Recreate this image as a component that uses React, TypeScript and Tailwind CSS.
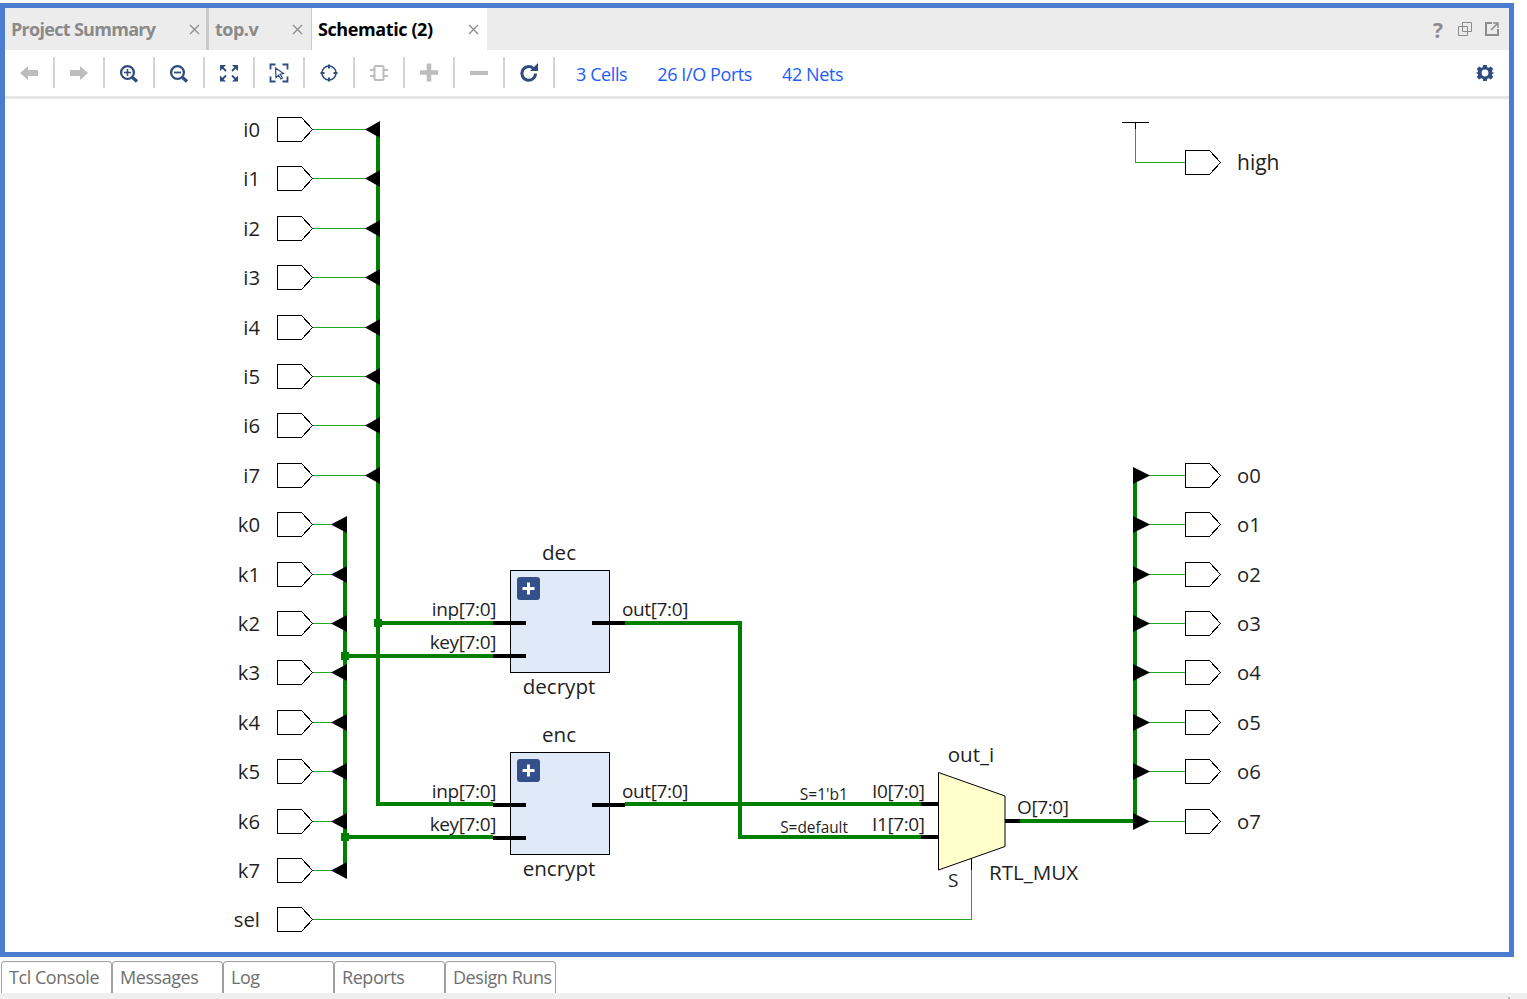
import React from "react";

const G = "#008000";
const T = "#22a822";
const INK = "#1f1f1f";
const NAVY = "#2f4b80";
const GR = "#bdbdbd";

const inputs: [string, number][] = [["i0",129],["i1",178],["i2",228],["i3",277],["i4",327],["i5",376],["i6",425],["i7",475],["k0",524],["k1",574],["k2",623],["k3",672],["k4",722],["k5",771],["k6",821],["k7",870]];
const outputs: [string, number][] = [["o0",475],["o1",524],["o2",574],["o3",623],["o4",672],["o5",722],["o6",771],["o7",821]];

// The svg origin is the canvas corner: page (5,99)
const OX = 5, OY = 99;

function Port({ x, y }: { x: number; y: number }) {
  return <polygon points={`${x+.5},${y-11.5} ${x+24.5},${y-11.5} ${x+35.5},${y+.5} ${x+24.5},${y+12.5} ${x+.5},${y+12.5}`} fill="#fff" stroke="#000" strokeWidth="1" shapeRendering="crispEdges" />;
}

function Label({ x, y, children, anchor = "start", size = 20.6, fill = INK, ls = 0 }: { x: number; y: number; children: React.ReactNode; anchor?: "start" | "middle" | "end"; size?: number; fill?: string; ls?: number }) {
  return <text x={x} y={y} textAnchor={anchor} fontSize={size} fill={fill} letterSpacing={ls} fontFamily="'Open Sans','Noto Sans',sans-serif">{children}</text>;
}

const Pin = (p: { x: number; y: number; children: React.ReactNode; anchor?: "start" | "end" }) => <Label size={19} ls={-0.38} {...p} />;

function Block({ y, inst, type }: { y: number; inst: string; type: string }) {
  return (
    <g>
      <Label x={559} y={y-10} anchor="middle">{inst}</Label>
      <rect x={510.5} y={y+.5} width={99} height={102} fill="#dfe9f7" stroke="#000" strokeWidth="1" shapeRendering="crispEdges" />
      <rect x={517} y={y+7} width={23} height={23} rx={3} fill="#34508a" />
      <path d={`M522.500 ${y+18.5}h12M528.500 ${y+12.5}v12`} stroke="#fff" strokeWidth="3" fill="none" />
      <rect x={493} y={y+51} width={33} height={4} fill="#000" />
      <rect x={493} y={y+84} width={33} height={4} fill="#000" />
      <rect x={592} y={y+51} width={33} height={4} fill="#000" />
      <Pin x={496} y={y+46} anchor="end">inp[7:0]</Pin>
      <Pin x={496} y={y+79} anchor="end">key[7:0]</Pin>
      <Pin x={622} y={y+46}>out[7:0]</Pin>
      <Label x={559} y={y+124} anchor="middle">{type}</Label>
    </g>
  );
}

function Schematic() {
  return (
    <svg width={1504} height={853} viewBox={`${OX} ${OY} 1504 853`} className="block">
      {/* buses */}
      <rect x={376} y={129} width={4} height={677} fill={G} />
      <rect x={343} y={524} width={4} height={346} fill={G} />
      <rect x={1133} y={475} width={4} height={346} fill={G} />
      <rect x={378} y={621} width={115} height={4} fill={G} />
      <rect x={345} y={654} width={148} height={4} fill={G} />
      <rect x={378} y={802} width={115} height={4} fill={G} />
      <rect x={345} y={835} width={148} height={4} fill={G} />
      <rect x={625} y={621} width={117} height={4} fill={G} />
      <rect x={738} y={621} width={4} height={218} fill={G} />
      <rect x={738} y={835} width={183} height={4} fill={G} />
      <rect x={625} y={802} width={296} height={4} fill={G} />
      <rect x={1020} y={819} width={115} height={4} fill={G} />
      {/* junctions */}
      <rect x={374} y={619} width={8} height={8} fill={G} />
      <rect x={341} y={652} width={8} height={8} fill={G} />
      <rect x={341} y={833} width={8} height={8} fill={G} />

      {/* inputs */}
      {inputs.map(([n, y], i) => {
        const tip = i < 8 ? 365 : 331;
        const right = i < 8 ? 380 : 347;
        return (
          <g key={n}>
            <rect x={313} y={y} width={tip - 313 + 2} height={1} fill={T} />
            <polygon points={`${tip},${y+.5} ${right},${y-8} ${right},${y+9}`} fill="#000" />
            <Port x={277} y={y} />
            <Label x={260} y={y+8} anchor="end" size={20.3}>{n}</Label>
          </g>
        );
      })}

      {/* sel */}
      <Port x={277} y={919} />
      <Label x={260} y={927} anchor="end" size={20.3}>sel</Label>
      <rect x={313} y={919} width={659} height={1} fill={T} />
      <rect x={971} y={870} width={1} height={50} fill={T} />
      <rect x={971} y={856} width={1} height={14} fill="#000" />

      {/* outputs */}
      {outputs.map(([n, y]) => (
        <g key={n}>
          <rect x={1148} y={y} width={37} height={1} fill={T} />
          <polygon points={`${1133},${y-8} ${1150},${y+.5} ${1133},${y+9}`} fill="#000" />
          <Port x={1185} y={y} />
          <Label x={1237} y={y+8} size={20.3}>{n}</Label>
        </g>
      ))}

      {/* high */}
      <rect x={1122} y={122} width={27} height={1} fill="#000" />
      <rect x={1135} y={122} width={1} height={7} fill="#000" />
      <rect x={1135} y={129} width={1} height={33} fill={T} />
      <rect x={1135} y={162} width={50} height={1} fill={T} />
      <Port x={1185} y={162} />
      <Label x={1237} y={170} size={21}>high</Label>

      <Block y={570} inst="dec" type="decrypt" />
      <Block y={752} inst="enc" type="encrypt" />

      {/* mux */}
      <rect x={921} y={802} width={17} height={4} fill="#000" />
      <rect x={921} y={835} width={17} height={4} fill="#000" />
      <rect x={1005} y={819} width={15} height={4} fill="#000" />
      <polygon points="938.5,772.5 1005,796 1005,846.5 938.5,870" fill="#ffffcc" stroke="#000" strokeWidth="1" />
      <Label x={971} y={762} anchor="middle">out_i</Label>
      <Label x={848} y={800} anchor="end" size={15.6}>S=1&#39;b1</Label>
      <Label x={848} y={833} anchor="end" size={15.4}>S=default</Label>
      <Pin x={872} y={798}>I0[7:0]</Pin>
      <Pin x={872} y={831}>I1[7:0]</Pin>
      <Pin x={1017} y={814}>O[7:0]</Pin>
      <Label x={948} y={887} size={19}>S</Label>
      <Label x={989} y={880}>RTL_MUX</Label>
    </svg>
  );
}

function Close() {
  return (
    <svg width="11" height="11" viewBox="0 0 11 11" className="block shrink-0">
      <path d="M1 1l9 9M10 1l-9 9" stroke="#8f8f8f" strokeWidth="1.4" fill="none" />
    </svg>
  );
}

const Ico = ({ children }: { children: React.ReactNode }) => (
  <svg width="20" height="20" viewBox="0 0 20 20" className="block">{children}</svg>
);

const icons: React.ReactNode[] = [
  <Ico><path d="M1 10l8-7v4h10v6H9v4z" fill={GR} /></Ico>,
  <Ico><path d="M19 10l-8-7v4H1v6h10v4z" fill={GR} /></Ico>,
  <Ico><circle cx="8.500" cy="9.500" r="6.400" fill="none" stroke={NAVY} strokeWidth="2.300" /><path d="M5 9.500h7M8.500 6v7" stroke={NAVY} strokeWidth="1.600" /><path d="M13.500 14.500l4.500 4" stroke={NAVY} strokeWidth="3.200" /></Ico>,
  <Ico><circle cx="8.500" cy="9.500" r="6.400" fill="none" stroke={NAVY} strokeWidth="2.300" /><path d="M5 9.500h7" stroke={NAVY} strokeWidth="1.800" /><path d="M13.500 14.500l4.500 4" stroke={NAVY} strokeWidth="3.200" /></Ico>,
  <Ico><path d="M1 2h6L1 8zM19 2h-6l6 6zM1 18.500h6l-6-6zM19 18.500h-6l6-6z" fill={NAVY} /><path d="M3.500 4.500l3.500 3.500M16.500 4.500L13 8M3.500 16L7 12.500M16.500 16L13 12.500" stroke={NAVY} strokeWidth="1.800" /></Ico>,
  <Ico><path d="M1.500 6.500V1.500h5M13.500 1.500h5v5M1.500 13.500v5h5M13.500 18.500h5v-5" fill="none" stroke={NAVY} strokeWidth="1.800" /><path d="M6.500 5l8 5.500-3.400.7 2.400 3.800-1.600 1-2.400-3.800-2.500 2.400z" fill="#fff" stroke={NAVY} strokeWidth="1.200" /></Ico>,
  <Ico><circle cx="10" cy="10" r="7" fill="none" stroke={NAVY} strokeWidth="1.600" /><path d="M10 1.500v4M10 14.500v4M1.500 10h4M14.500 10h4" stroke={NAVY} strokeWidth="2" /></Ico>,
  <Ico><rect x="5.500" y="3" width="9" height="14" rx="1" fill="none" stroke={GR} strokeWidth="2" /><path d="M1 7h4.500M14.500 7H19M1 13h4.500M14.500 13H19" stroke={GR} strokeWidth="2" /></Ico>,
  <Ico><path d="M10 .5v18M1 9.500h18" stroke={GR} strokeWidth="4.500" /></Ico>,
  <Ico><path d="M1 10h18" stroke={GR} strokeWidth="4.200" /></Ico>,
  <Ico><path d="M16.500 10.500a6.800 6.800 0 1 1-2.100-5" fill="none" stroke={NAVY} strokeWidth="3" /><path d="M11 8h8V0z" fill={NAVY} /></Ico>,
];

function Tab({ cls, label, active, track }: { cls: string; label: string; active?: boolean; track: string }) {
  return (
    <div className={`${cls} flex h-full items-center justify-between pl-[6px] ${active ? "bg-white text-black" : "border-r-[#c8c8c8] text-[#8a8a8a]"}`}>
      <span className={`${track} text-[18px] font-bold leading-none`}>{label}</span>
      <Close />
    </div>
  );
}

export default function App() {
  return (
    <div className="h-[999px] w-[1527px] overflow-hidden bg-white font-['Open_Sans','Noto_Sans',sans-serif]">
      <div className="mt-[3px] flex h-[954px] w-[1514px] flex-col border-[5px] border-[#4a7dcf]">
        <div className="flex h-[42px] shrink-0 items-stretch bg-[#ececec]">
          <Tab cls="w-[204px] border-r-[3px] pr-[6px]" track="tracking-[-0.7px]" label="Project Summary" />
          <Tab cls="w-[103px] border-r pr-[8px]" track="tracking-[-0.5px]" label="top.v" />
          <Tab cls="w-[175px] pr-[8px]" track="tracking-[-0.4px]" label="Schematic (2)" active />
          <div className="ml-auto flex items-center gap-[13px] pr-[10px]">
            <span className="w-[14px] translate-y-[1px] text-center text-[21px] font-bold leading-none text-[#8c8c8c]">?</span>
            <svg width="14" height="14" viewBox="0 0 14 14" className="block"><path d="M4.500.5h9v9h-9zM.5 4.500h9v9h-9z" fill="none" stroke="#8c8c8c" strokeWidth="1" /></svg>
            <svg width="14" height="14" viewBox="0 0 14 14" className="block"><path d="M7 1H1v12h12V7" fill="none" stroke="#8c8c8c" strokeWidth="2" /><path d="M6 8l6-6M8 1h5v5" fill="none" stroke="#8c8c8c" strokeWidth="1.500" /></svg>
          </div>
        </div>
        <div className="flex h-[49px] shrink-0 items-center border-b-[3px] border-b-[#e6e6e6] pb-[1px]">
          {icons.map((ic, i) => (
            <div key={i} className="flex h-[31px] w-[50px] items-center justify-center border-r-2 border-r-[#d4d4d4]">{ic}</div>
          ))}
          <div className="ml-[21px] flex translate-y-[1px] gap-[30px] text-[18px] leading-none tracking-[-0.4px] text-[#1c5cff]">
            <span>3 Cells</span>
            <span>26 I/O Ports</span>
            <span>42 Nets</span>
          </div>
          <svg width="20" height="20" viewBox="0 0 20 20" className="ml-auto mr-[14px] block">
            <path d="M8 1h4l.5 2.500 1.800.8 2.200-1.400 2.600 2.600-1.400 2.200.8 1.800L21 10l-2.500.5-.8 1.800 1.400 2.200-2.600 2.600-2.200-1.400-1.800.8L12 19H8l-.5-2.500-1.800-.8-2.200 1.400-2.600-2.600 1.400-2.200-.8-1.800L-1 10l2.500-.5.8-1.800-1.400-2.200 2.600-2.600 2.200 1.400 1.800-.8z" fill={NAVY} transform="translate(1 1) scale(.9)" />
            <circle cx="10" cy="10" r="3.400" fill="#fff" />
          </svg>
        </div>
        <div className="min-h-0 flex-1 overflow-hidden bg-white"><Schematic /></div>
      </div>
      <div className="mt-[4px] flex h-[32px] pl-[1px]">
        {["Tcl Console", "Messages", "Log", "Reports", "Design Runs"].map((t) => (
          <div key={t} className="flex h-full w-[111px] items-center overflow-hidden rounded-t-[4px] border border-b-0 border-[#a0a0a0] pb-[1px] pl-[7px] text-[18px] leading-none tracking-[-0.45px] whitespace-nowrap text-[#6f6f6f]">{t}</div>
        ))}
      </div>
      <div className="h-[6px] bg-[#efefef] pl-[1508px] pt-[4px]"><div className="h-[2px] w-[2px] bg-[#bbbbbb]" /></div>
    </div>
  );
}
